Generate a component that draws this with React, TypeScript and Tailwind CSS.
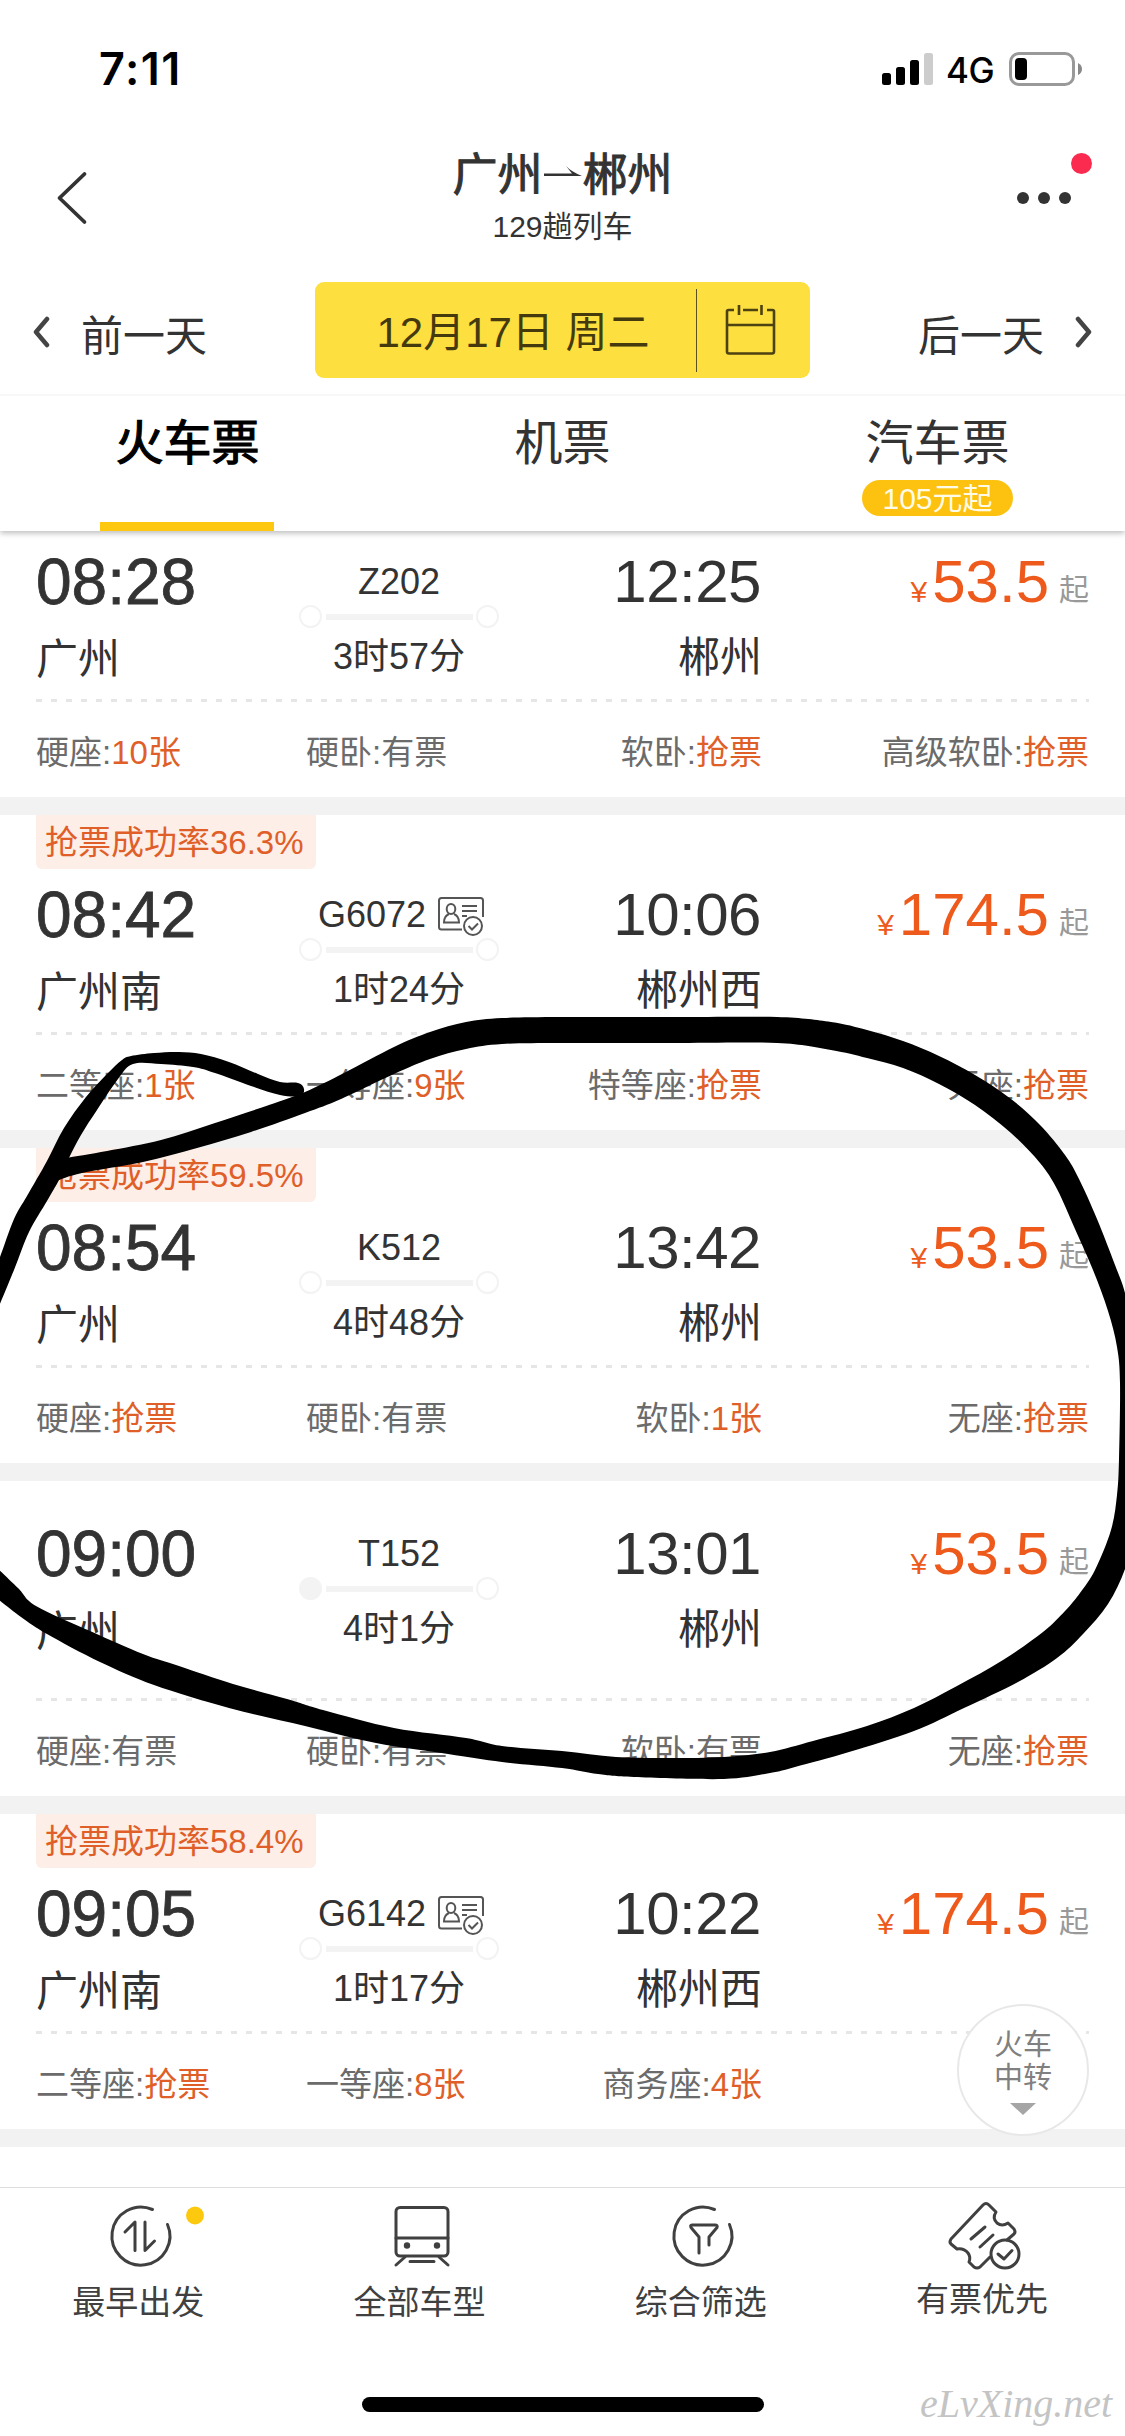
import type { ReactNode } from "react";

type Seat = { name: string; value: string; hot?: boolean };

type Train = {
  rate?: string;
  partial?: boolean;
  depart: string;
  from: string;
  arrive: string;
  to: string;
  no: string;
  idCard?: boolean;
  origin?: boolean;
  duration: string;
  price: string;
  seats: Seat[];
};

const trains: Train[] = [
  {
    partial: true,
    depart: "08:28",
    from: "广州",
    arrive: "12:25",
    to: "郴州",
    no: "Z202",
    duration: "3时57分",
    price: "53.5",
    seats: [
      { name: "硬座", value: "10张", hot: true },
      { name: "硬卧", value: "有票" },
      { name: "软卧", value: "抢票", hot: true },
      { name: "高级软卧", value: "抢票", hot: true },
    ],
  },
  {
    rate: "36.3%",
    depart: "08:42",
    from: "广州南",
    arrive: "10:06",
    to: "郴州西",
    no: "G6072",
    idCard: true,
    duration: "1时24分",
    price: "174.5",
    seats: [
      { name: "二等座", value: "1张", hot: true },
      { name: "一等座", value: "9张", hot: true },
      { name: "特等座", value: "抢票", hot: true },
      { name: "无座", value: "抢票", hot: true },
    ],
  },
  {
    rate: "59.5%",
    depart: "08:54",
    from: "广州",
    arrive: "13:42",
    to: "郴州",
    no: "K512",
    duration: "4时48分",
    price: "53.5",
    seats: [
      { name: "硬座", value: "抢票", hot: true },
      { name: "硬卧", value: "有票" },
      { name: "软卧", value: "1张", hot: true },
      { name: "无座", value: "抢票", hot: true },
    ],
  },
  {
    depart: "09:00",
    from: "广州",
    arrive: "13:01",
    to: "郴州",
    no: "T152",
    origin: true,
    duration: "4时1分",
    price: "53.5",
    seats: [
      { name: "硬座", value: "有票" },
      { name: "硬卧", value: "有票" },
      { name: "软卧", value: "有票" },
      { name: "无座", value: "抢票", hot: true },
    ],
  },
  {
    rate: "58.4%",
    depart: "09:05",
    from: "广州南",
    arrive: "10:22",
    to: "郴州西",
    no: "G6142",
    idCard: true,
    duration: "1时17分",
    price: "174.5",
    seats: [
      { name: "二等座", value: "抢票", hot: true },
      { name: "一等座", value: "8张", hot: true },
      { name: "商务座", value: "4张", hot: true },
    ],
  },
];

type Point = [number, number];

// Outer and inner edges of the hand-drawn circle, in page pixels
const loopOuter: Point[] = [
  [66, 1158], [107, 1151], [161, 1140], [215, 1123], [269, 1105], [305, 1092], [344, 1073], [394, 1047], [430, 1032],
  [466, 1022], [502, 1018], [562, 1017], [670, 1017], [777, 1017], [831, 1022], [867, 1030], [903, 1041], [939, 1056],
  [975, 1075], [1011, 1099], [1040, 1125], [1065, 1155], [1079, 1179], [1097, 1219], [1115, 1265], [1125, 1293],
  [1135, 1340], [1140, 1430], [1135, 1530], [1125, 1569], [1108, 1604], [1083, 1634], [1057, 1658], [1018, 1682],
  [964, 1708], [914, 1731], [849, 1752], [795, 1767], [770, 1773], [724, 1779], [634, 1777], [598, 1774], [562, 1768],
  [502, 1762], [448, 1754], [376, 1743], [305, 1726], [229, 1708], [154, 1685], [100, 1662], [47, 1634], [21, 1617],
  [-6, 1596],
];

const loopInner: Point[] = [
  [-6, 1565], [18, 1588], [36, 1606], [90, 1631], [143, 1654], [179, 1666], [233, 1684], [287, 1699], [323, 1710],
  [394, 1728], [466, 1738], [502, 1746], [562, 1751], [616, 1757], [670, 1758], [724, 1757], [770, 1752], [813, 1741],
  [867, 1726], [914, 1708], [957, 1686], [1003, 1660], [1043, 1632], [1065, 1611], [1080, 1593], [1095, 1570],
  [1111, 1530], [1117, 1495], [1119, 1459], [1120, 1383], [1117, 1347], [1108, 1311], [1093, 1270], [1075, 1229],
  [1057, 1189], [1040, 1163], [1011, 1133], [975, 1105], [939, 1084], [903, 1068], [867, 1058], [831, 1050],
  [777, 1043], [670, 1043], [562, 1043], [502, 1044], [466, 1049], [430, 1059], [394, 1074], [341, 1099], [305, 1113],
  [251, 1132], [197, 1148], [143, 1162], [82, 1173], [56, 1181],
];

const tail: Point[] = [
  [-6, 1270], [0, 1257], [14, 1219], [27, 1196], [47, 1161], [64, 1128], [86, 1097], [107, 1074], [122, 1060],
  [131, 1056], [154, 1053], [179, 1052], [201, 1054], [229, 1062], [258, 1074], [280, 1082], [298, 1083], [304, 1089],
  [300, 1096], [280, 1095], [251, 1086], [215, 1073], [193, 1067], [161, 1064], [133, 1064], [118, 1079], [97, 1110],
  [81, 1135], [68, 1160], [59, 1180], [47, 1201], [29, 1232], [14, 1270], [-6, 1318],
];

function smoothPath(points: Point[]) {
  let d = `M${points[0][0]} ${points[0][1]}`;
  for (let i = 0; i < points.length - 1; i++) {
    const p0 = points[i - 1] ?? points[i];
    const p1 = points[i];
    const p2 = points[i + 1];
    const p3 = points[i + 2] ?? p2;
    d += `C${p1[0] + (p2[0] - p0[0]) / 6} ${p1[1] + (p2[1] - p0[1]) / 6} ${p2[0] - (p3[0] - p1[0]) / 6} ${p2[1] - (p3[1] - p1[1]) / 6} ${p2[0]} ${p2[1]}`;
  }
  return d;
}

function Doodle() {
  return (
    <svg className="absolute inset-0 z-30 pointer-events-none" width="1125" height="2436" viewBox="0 0 1125 2436">
      <path d={`${smoothPath(loopOuter)}${smoothPath(loopInner).replace("M", "L")}Z`} />
      <path d={`${smoothPath(tail)}Z`} />
    </svg>
  );
}

function StatusBar() {
  return (
    <div className="flex h-[132px] items-start justify-between pt-[47px] pl-[99px] pr-[42px] text-black font-['Inter',sans-serif]">
      <span className="text-[45px] leading-[44px] font-semibold tracking-[1.5px]">7:11</span>
      <div className="flex items-start">
        <svg className="mt-1.5" width="52" height="34" viewBox="0 0 52 34">
          <rect x="0" y="20" width="9" height="12" rx="2.5" />
          <rect x="14" y="14" width="9" height="18" rx="2.5" />
          <rect x="28" y="7" width="9" height="25" rx="2.5" />
          <rect x="42" y="0" width="9" height="32" rx="2.5" fill="#ccc" />
        </svg>
        <span className="ml-3 w-[51px] text-[35px] leading-[47px] font-medium tracking-[-0.5px]">4G</span>
        <svg className="ml-3 mt-[5px]" width="74" height="34" viewBox="0 0 74 34">
          <rect x="1.5" y="1.5" width="63" height="31" rx="8.5" fill="none" stroke="#999" strokeWidth="3" />
          <rect x="6" y="6" width="12" height="22" rx="4" />
          <path d="M69 11q4 2 4 6t-4 6z" fill="#888" />
        </svg>
      </div>
    </div>
  );
}

function NavBar() {
  return (
    <div className="flex h-[150px] justify-between text-[#333]">
      <svg className="ml-[54px] mt-[38px]" width="40" height="56" viewBox="0 0 40 56" fill="none" stroke="#333" strokeWidth="3.8" strokeLinecap="round" strokeLinejoin="round">
        <path d="M30.500 4L5.500 28l25 24" />
      </svg>
      <div className="ml-4 flex flex-col items-center pt-[19px]">
        <h1 className="flex items-center text-[45px] leading-[50px] font-normal [-webkit-text-stroke:1px_#333]">
          广州
          <svg className="mx-px -mt-1.5" width="38" height="16" viewBox="0 0 38 16" fill="#333">
            <path d="M0 8.500h28L22 1q5 5.500 16 10H0z" />
          </svg>
          郴州
        </h1>
        <p className="mt-2 text-[30px] leading-9">129趟列车</p>
      </div>
      <svg className="mr-8 mt-5" width="78" height="60" viewBox="0 0 78 60">
        <circle cx="66.5" cy="11.5" r="10.5" fill="#fb2a4f" />
        <circle cx="8" cy="46" r="6" fill="#333" />
        <circle cx="29" cy="46" r="6" fill="#333" />
        <circle cx="50" cy="46" r="6" fill="#333" />
      </svg>
    </div>
  );
}

function DateBar() {
  return (
    <div className="flex h-[114px] items-start justify-between border-b-2 border-[#f8f8f8] px-8 text-[42px] text-[#333]">
      <div className="flex h-24 w-[283px] items-center">
        <svg className="mt-1" width="18" height="32" viewBox="0 0 18 32" fill="none" stroke="#444" strokeWidth="4.5" strokeLinecap="round" strokeLinejoin="round">
          <path d="M15 3L4 16l11 13" />
        </svg>
        <span className="ml-[31px] mt-3.5 leading-12">前一天</span>
      </div>
      <div className="flex h-24 w-[495px] items-center rounded-[9px] bg-[#fddf3f] text-[#443a0d]">
        <span className="w-[381px] pl-[15px] pt-1 text-center">12月17日 周二</span>
        <span className="h-[83px] w-px bg-[#5c511c]" />
        <svg className="ml-7" width="52" height="52" viewBox="0 0 52 52" fill="none" stroke="#4d4212" strokeWidth="2.600">
          <path d="M9 6H3.500Q2 6 2 7.500V47.500Q2 49.500 4 49.500H47Q49 49.500 49 47.500V7.500Q49 6 47.500 6H42M18 6H33M2 21H49M14 1V11M36.500 1V11" />
        </svg>
      </div>
      <div className="flex h-24 w-[283px] items-center justify-end">
        <span className="mr-[31px] mt-3.5 leading-12">后一天</span>
        <svg className="mt-1" width="18" height="32" viewBox="0 0 18 32" fill="none" stroke="#444" strokeWidth="4.5" strokeLinecap="round" strokeLinejoin="round">
          <path d="M3 3L14 16 3 29" />
        </svg>
      </div>
    </div>
  );
}

function Tabs() {
  return (
    <div className="flex h-[135px] text-[48px] leading-14 text-[#333]">
      <div className="flex w-[375px] flex-col items-center justify-between pt-5">
        <span className="text-black [-webkit-text-stroke:1.2px_#000]">火车票</span>
        <span className="mr-px h-[9px] w-[174px] bg-[#fdc80f]" />
      </div>
      <div className="flex w-[375px] flex-col items-center pt-5">机票</div>
      <div className="flex w-[375px] flex-col items-center pt-5">
        汽车票
        <span className="mt-2 h-9 w-[151px] rounded-full bg-[#fdc10f] text-center text-[30px] leading-[38px] text-[#fffbe8]">105元起</span>
      </div>
    </div>
  );
}

function IdCardIcon() {
  return (
    <svg className="ml-3 mt-0.5" width="46" height="40" viewBox="0 0 46 40" fill="none" stroke="#555" strokeWidth="2">
      <path d="M24 32.500H3.500Q1 32.500 1 30V3.500Q1 1 3.500 1H42.500Q45 1 45 3.500V20" />
      <ellipse cx="13" cy="12" rx="4.300" ry="5" />
      <path d="M11 17q-5 2-5 8.500h15q0-6.500-5-8.500M24 9h15M24 14h15M24 19h5" />
      <circle cx="35" cy="29" r="9" />
      <path d="M30.500 29l3.500 3.500 6-6" />
    </svg>
  );
}

function TrainCard({ train }: { train: Train }) {
  return (
    <div className="mb-[18px] shrink-0 bg-white px-9 text-[#333]">
      <div className={train.partial ? "h-[168px]" : "h-[217px]"}>
        {train.rate && (
          <div className="h-[54px] w-[280px] rounded-b-md bg-[#fdeee8] pl-[9px] text-[33px] leading-[56px] text-[#e05f28]">
            抢票成功率{train.rate}
          </div>
        )}
        <div className={train.rate ? "flex pt-3.5" : train.partial ? "flex pt-[19px]" : "flex pt-[41px]"}>
          <div className="w-[270px]">
            <div className="text-[64px] leading-16 [-webkit-text-stroke:0.8px_#333]">{train.depart}</div>
            <div className="mt-[22px] text-[42px] leading-12">{train.from}</div>
          </div>
          <div className="flex w-[186px] flex-col items-center pt-3 text-[36px] leading-10">
            <div className={train.idCard ? "ml-1 flex h-10" : "h-10"}>
              {train.no}
              {train.idCard && <IdCardIcon />}
            </div>
            <div className="mt-[3px] mb-[9px] flex h-[23px] w-[200px] items-center justify-between">
              <span className={train.origin ? "size-[23px] rounded-full bg-[#f3f3f3]" : "size-[23px] rounded-full border-2 border-[#f3f3f3]"} />
              <span className="h-1.5 w-[147px] bg-[#f3f3f3]" />
              <span className="size-[23px] rounded-full border-2 border-[#f3f3f3]" />
            </div>
            <div className="whitespace-nowrap">{train.duration}</div>
          </div>
          <div className="w-[270px] text-right">
            <div className="pr-px text-[60px] leading-16 tracking-[-0.500px]">{train.arrive}</div>
            <div className="mt-5 text-[42px] leading-12">{train.to}</div>
          </div>
          <div className="flex flex-1 items-baseline justify-end leading-16 text-[#ee5a1c]">
            <span className="text-[30px]">¥</span>
            <span className="ml-[5px] text-[60px]">{train.price}</span>
            <span className="ml-2.5 -translate-y-0.5 text-[30px] text-[#999]">起</span>
          </div>
        </div>
      </div>
      <div className="h-[3px] bg-[repeating-linear-gradient(90deg,#e6e6e6_0_6px,transparent_6px_15px)]" />
      <div className="flex h-[95px] pt-[31px] text-[33px] leading-10 text-[#6b6b6b]">
        {train.seats.map((seat, i) => (
          <div key={seat.name} className={["w-[270px]", "w-[186px] whitespace-nowrap", "w-[270px] text-right", "flex-1 text-right"][i]}>
            {seat.name}:<span className={seat.hot ? "text-[#e05f28]" : ""}>{seat.value}</span>
          </div>
        ))}
      </div>
    </div>
  );
}

function TransferButton() {
  return (
    <button className="absolute top-[2004px] left-[957px] z-20 flex size-[132px] flex-col items-center rounded-full border-2 border-[#e8e8e8] bg-white pt-[23px] text-[29px] leading-[33px] text-[#808080]">
      <span>火车</span>
      <span>中转</span>
      <svg className="mt-2" width="26" height="12" viewBox="0 0 26 12" fill="#a5a5a5">
        <path d="M0 0h26L13 12z" />
      </svg>
    </button>
  );
}

function BottomItem({ label, children, raised }: { label: string; children: ReactNode; raised?: boolean }) {
  return (
    <div className="flex flex-1 flex-col items-center pt-3">
      <svg width="132" height="72" viewBox="-66 -36 132 72" fill="none" stroke="#404040" strokeWidth="3" strokeLinecap="round" strokeLinejoin="round">
        {children}
      </svg>
      <span className={raised ? "mr-[5px] mt-2 text-[33px] leading-10" : "mr-[5px] mt-[11px] text-[33px] leading-10"}>{label}</span>
    </div>
  );
}

function BottomBar() {
  return (
    <div className="relative z-10 flex h-[249px] flex-col items-center border-t border-[#ddd] bg-white text-[#404040]">
      <div className="flex h-[209px] w-full shrink-0">
        <BottomItem label="最早出发">
          <path d="M11.500-26.500A29 29 0 1 0 26.500-11.500M-16-4L-6-14V14.500M4-14V14.500L13.500 5" />
          <circle cx="54" cy="-20.500" r="9" fill="#fdc90f" stroke="none" />
        </BottomItem>
        <BottomItem label="全部车型">
          <rect x="-26" y="-28.500" width="52" height="48.500" rx="4" />
          <path d="M-26 2H26M-17 21L-26 29M17 21L26 29M-12 25.500H12" />
          <circle cx="-15" cy="9.500" r="3.200" fill="#404040" stroke="none" />
          <circle cx="15" cy="9.500" r="3.200" fill="#404040" stroke="none" />
        </BottomItem>
        <BottomItem label="综合筛选">
          <path d="M11.500-26.500A29 29 0 1 0 26.500-11.500M-4 17V1L-12-8.500Q-13-11-11-11H12Q15-11 14-8.500L6 1V9" />
        </BottomItem>
        <BottomItem label="有票优先" raised>
          <path d="M6 21L-4 31Q-7 33-10 31L-15 26Q-13 21-16 17Q-20 12-27 13L-33 8Q-35 6-33 3L-1-31Q2-34 5-31L12-24Q8-18 13-13Q18-9 24-13L30-7Q32-4 30-2L23 4M-13 3L1-9M-4 11L9-1" />
          <circle cx="21" cy="18" r="14" />
          <path d="M14 18L20 23 28 14.500" />
        </BottomItem>
      </div>
      <div className="h-[15px] w-[402px] rounded-full bg-black" />
      <div className="absolute top-[190px] left-[920px] text-[40px] leading-[52px] text-[#c4c4c4] italic font-['Liberation_Serif',serif]">eLvXing.net</div>
    </div>
  );
}

export default function App() {
  return (
    <div className="relative flex h-[2436px] w-[1125px] flex-col overflow-hidden bg-white font-['Liberation_Sans','Noto_Sans_CJK_SC',sans-serif]">
      <header className="relative z-10 h-[531px] shrink-0 bg-white shadow-[0_2px_6px_rgba(0,0,0,0.28)]">
        <StatusBar />
        <NavBar />
        <DateBar />
        <Tabs />
      </header>
      <main className="flex flex-1 flex-col bg-[#f2f2f2]">
        {trains.map((train) => (
          <TrainCard key={train.depart} train={train} />
        ))}
        <div className="flex-1 bg-white" />
      </main>
      <BottomBar />
      <TransferButton />
      <Doodle />
    </div>
  );
}
